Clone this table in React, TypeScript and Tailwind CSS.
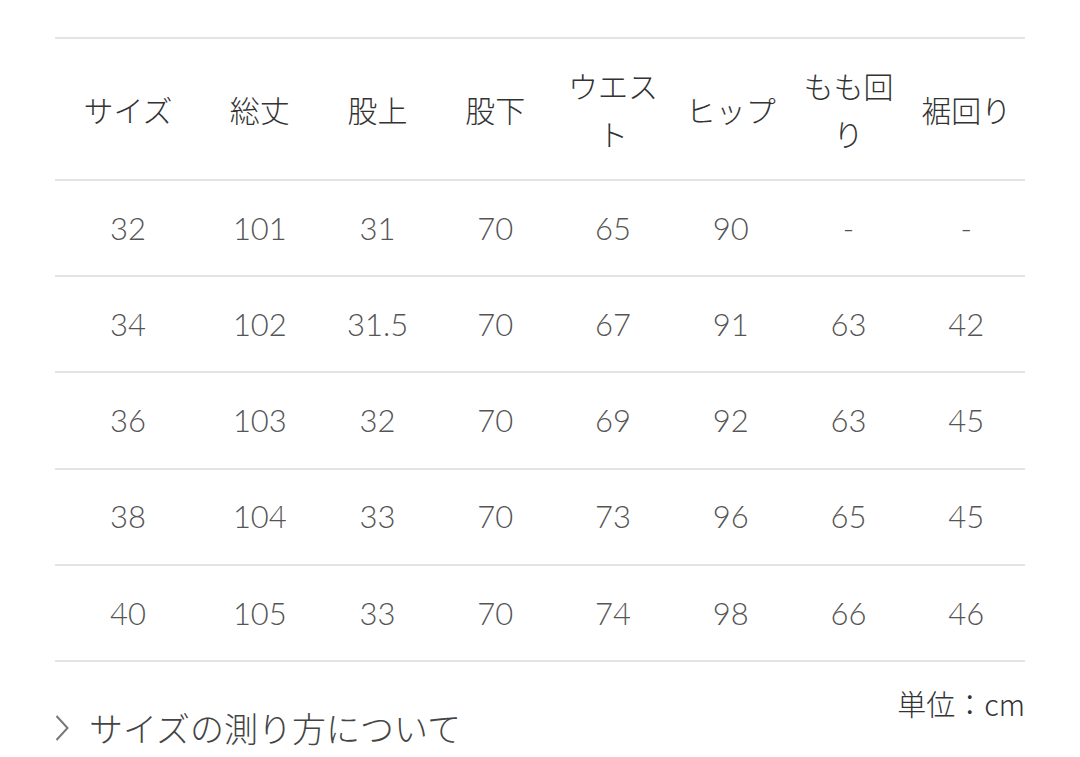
const headers = ['サイズ', '総丈', '股上', '股下', 'ウエスト', 'ヒップ', 'もも回り', '裾回り'];

const rows = [
  ['32', '101', '31', '70', '65', '90', '-', '-'],
  ['34', '102', '31.5', '70', '67', '91', '63', '42'],
  ['36', '103', '32', '70', '69', '92', '63', '45'],
  ['38', '104', '33', '70', '73', '96', '65', '45'],
  ['40', '105', '33', '70', '74', '98', '66', '46'],
];

const jp = { fontFamily: '"Noto Sans CJK JP", "Noto Sans", sans-serif' };
const num = { fontFamily: 'Lato, "Noto Sans CJK JP", sans-serif' };

export default function App() {
  return (
    <div className="w-[1080px] h-[757px] bg-white overflow-hidden px-[55px] pt-[37px]">
      {/* Size table */}
      <div className="border-t-2 border-[#e3e3e3]">
        <div className="grid grid-cols-[146px_repeat(7,1fr)] h-[142px] border-b-2 border-[#e3e3e3]">
          {headers.map((h) => (
            <div
              key={h}
              className="flex items-center justify-center px-[12px] text-center text-[30px] leading-[48px] font-extralight text-[#333]"
              style={jp}
            >
              {h}
            </div>
          ))}
        </div>
        {rows.map((r, i) => (
          <div
            key={i}
            className="grid grid-cols-[146px_repeat(7,1fr)] h-[96.2px] border-b-2 border-[#e3e3e3]"
          >
            {r.map((c, j) => (
              <div
                key={j}
                className="flex items-center justify-center text-[31px] font-light text-[#555]"
                style={num}
              >
                {c}
              </div>
            ))}
          </div>
        ))}
      </div>

      {/* Footer */}
      <div className="flex justify-between h-[94px]">
        <div className="self-end flex items-center gap-[20px] pb-[8px] text-[#444]">
          <svg width="14" height="28" viewBox="0 0 14 28" fill="none" stroke="#777" strokeWidth="2">
            <path d="M1.5 2 L12.5 14 L1.5 26" />
          </svg>
          <span className="text-[34px] leading-[40px] font-extralight" style={jp}>
            サイズの測り方について
          </span>
        </div>
        <div className="self-start pt-[22px] text-[29px] leading-[38px] font-extralight text-[#333]" style={jp}>
          単位：cm
        </div>
      </div>
    </div>
  );
}
